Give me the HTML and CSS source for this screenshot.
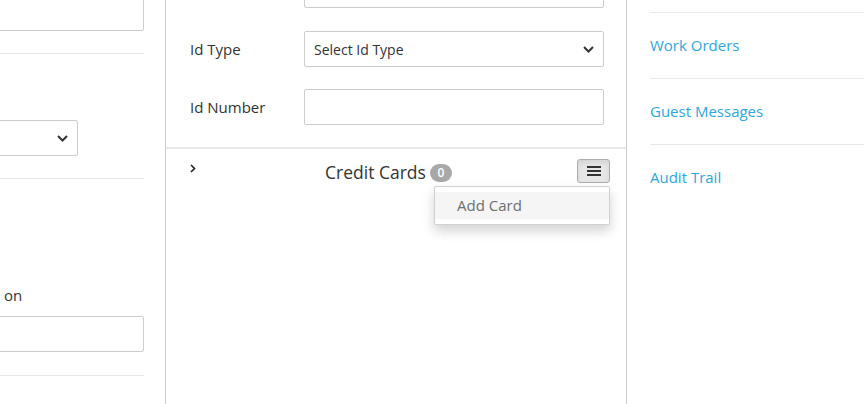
FILE: index.html
```html
<!DOCTYPE html>
<html>
<head>
<meta charset="utf-8">
<link rel="stylesheet" href="styles.css">
</head>
<body>
<div class="page">
  <div class="col-left">
    <div class="left-inner">
      <div class="field field-a"></div>
      <div class="rule rule-1"></div>
      <div class="field select-left">
        <svg class="chev" width="11" height="7" viewBox="0 0 11 7"><path d="M1 1 L5.5 5.5 L10 1" fill="none" stroke="#333" stroke-width="2"/></svg>
      </div>
      <div class="rule rule-2"></div>
      <div class="left-label">on</div>
      <div class="field field-b"></div>
      <div class="rule rule-3"></div>
    </div>
  </div>

  <div class="col-mid">
    <div class="form">
      <div class="row row-top">
        <div class="label"></div>
        <div class="field"></div>
      </div>
      <div class="row row-type">
        <div class="label">Id Type</div>
        <div class="field select">
          <span class="select-text">Select Id Type</span>
          <svg class="chev" width="11" height="7" viewBox="0 0 11 7"><path d="M1 1 L5.5 5.5 L10 1" fill="none" stroke="#333" stroke-width="2"/></svg>
        </div>
      </div>
      <div class="row row-num">
        <div class="label">Id Number</div>
        <div class="field"></div>
      </div>
    </div>
    <div class="section">
      <div class="section-head">
        <svg class="toggle" width="6" height="9" viewBox="0 0 6 9"><path d="M1 1 L4.5 4.5 L1 8" fill="none" stroke="#222" stroke-width="1.6"/></svg>
        <div class="title-wrap">
          <span class="title">Credit Cards</span>
          <span class="badge">0</span>
        </div>
        <div class="menu-wrap">
          <button class="menu-btn" type="button">
            <span class="bar"></span><span class="bar"></span><span class="bar"></span>
          </button>
          <ul class="dropdown">
            <li class="dropdown-item">Add Card</li>
          </ul>
        </div>
      </div>
    </div>
  </div>

  <div class="col-right">
    <ul class="links">
      <li class="link-item"><a class="link">Work Orders</a></li>
      <li class="link-item"><a class="link">Guest Messages</a></li>
      <li class="link-item"><a class="link">Audit Trail</a></li>
    </ul>
  </div>
</div>
</body>
</html>
```

FILE: styles.css
```css
* { box-sizing: border-box; }
html, body { margin: 0; padding: 0; background: #fff; }
body {
  font-family: "Open Sans", "Noto Sans", sans-serif;
  color: #333;
  width: 864px;
  height: 404px;
  overflow: hidden;
}
.page {
  display: flex;
  height: 404px;
}

.field {
  height: 36px;
  border: 1px solid #ccc;
  border-radius: 2px;
  background: #fff;
}
.chev { display: block; }

/* left column */
.col-left {
  width: 166px;
  flex: none;
  border-right: 1px solid #ccc;
  overflow: hidden;
}
.left-inner {
  width: 444px;
  margin-left: -300px;
  display: flex;
  flex-direction: column;
}
.rule { height: 1px; background: #e8e8e8; width: 444px; }
.field-a { margin-top: -5px; width: 444px; }
.rule-1 { margin-top: 22px; }
.select-left {
  margin-top: 66px;
  width: 378px;
  display: flex;
  align-items: center;
  justify-content: flex-end;
  padding-right: 9px;
}
.rule-2 { margin-top: 22px; }
.left-label {
  margin-top: 106px;
  padding-left: 304px;
  font-size: 15px;
  line-height: 20px;
  color: #333;
}
.field-b { margin-top: 11px; width: 444px; }
.rule-3 { margin-top: 23px; }

/* middle column */
.col-mid {
  width: 461px;
  flex: none;
  border-right: 1px solid #ccc;
  display: flex;
  flex-direction: column;
}
.form {
  padding: 0 22px 0 24px;
}
.row {
  display: flex;
  align-items: center;
  height: 36px;
}
.row .label {
  width: 114px;
  flex: none;
  font-size: 15px;
  line-height: 20px;
  padding-bottom: 1px;
  color: #333;
}
.row .field { width: 300px; }
.row-top { margin-top: -28px; }
.row-type { margin-top: 23px; }
.row-num { margin-top: 22px; }
.select {
  display: flex;
  align-items: center;
  justify-content: space-between;
  padding: 0 9px 0 9px;
}
.select-text { font-size: 14px; color: #333; }

.section {
  margin-top: 22px;
  border-top: 2px solid #e8e8e8;
}
.section-head {
  display: flex;
  align-items: flex-start;
  padding: 10px 16px 0 24px;
}
.toggle { margin-top: 5px; flex: none; }
.title-wrap {
  flex: 1;
  display: flex;
  justify-content: center;
  align-items: center;
  padding-left: 4px;
  padding-top: 2px;
}
.title {
  font-size: 17.5px;
  line-height: 22px;
  color: #333;
}
.badge {
  margin-left: 4px;
  width: 22px;
  height: 18px;
  border-radius: 9px;
  background: #a8a8a8;
  color: #fff;
  font-size: 12px;
  font-weight: 600;
  line-height: 18px;
  text-align: center;
  margin-top: 1px;
}
.menu-wrap { position: relative; flex: none; }
.menu-btn {
  width: 33px;
  height: 24px;
  background: #e6e6e6;
  border: 1px solid #adadad;
  border-radius: 3px;
  padding: 0;
  display: flex;
  flex-direction: column;
  align-items: center;
  justify-content: center;
  gap: 2px;
  box-shadow: inset 0 3px 5px rgba(0,0,0,0.08);
}
.bar {
  display: block;
  width: 14px;
  height: 2px;
  background: #333;
}
.dropdown {
  position: absolute;
  top: 27px;
  right: 0;
  width: 176px;
  margin: 0;
  padding: 5px 0;
  list-style: none;
  background: #fff;
  border: 1px solid rgba(0,0,0,0.18);
  border-radius: 2px;
  box-shadow: 0 6px 12px rgba(0,0,0,0.175);
}
.dropdown-item {
  padding: 3px 22px;
  font-size: 15px;
  line-height: 21px;
  height: 27px;
  background: #f5f5f5;
  color: #6f6f6f;
}

/* right column */
.col-right {
  flex: 1;
  padding-left: 23px;
}
.links {
  list-style: none;
  margin: 12px 0 0 0;
  padding: 0;
}
.link-item {
  border-top: 1px solid #e8e8e8;
  height: 66px;
  line-height: 65px;
}
.link {
  font-size: 15px;
  color: #2ea6d8;
  text-decoration: none;
}
```
